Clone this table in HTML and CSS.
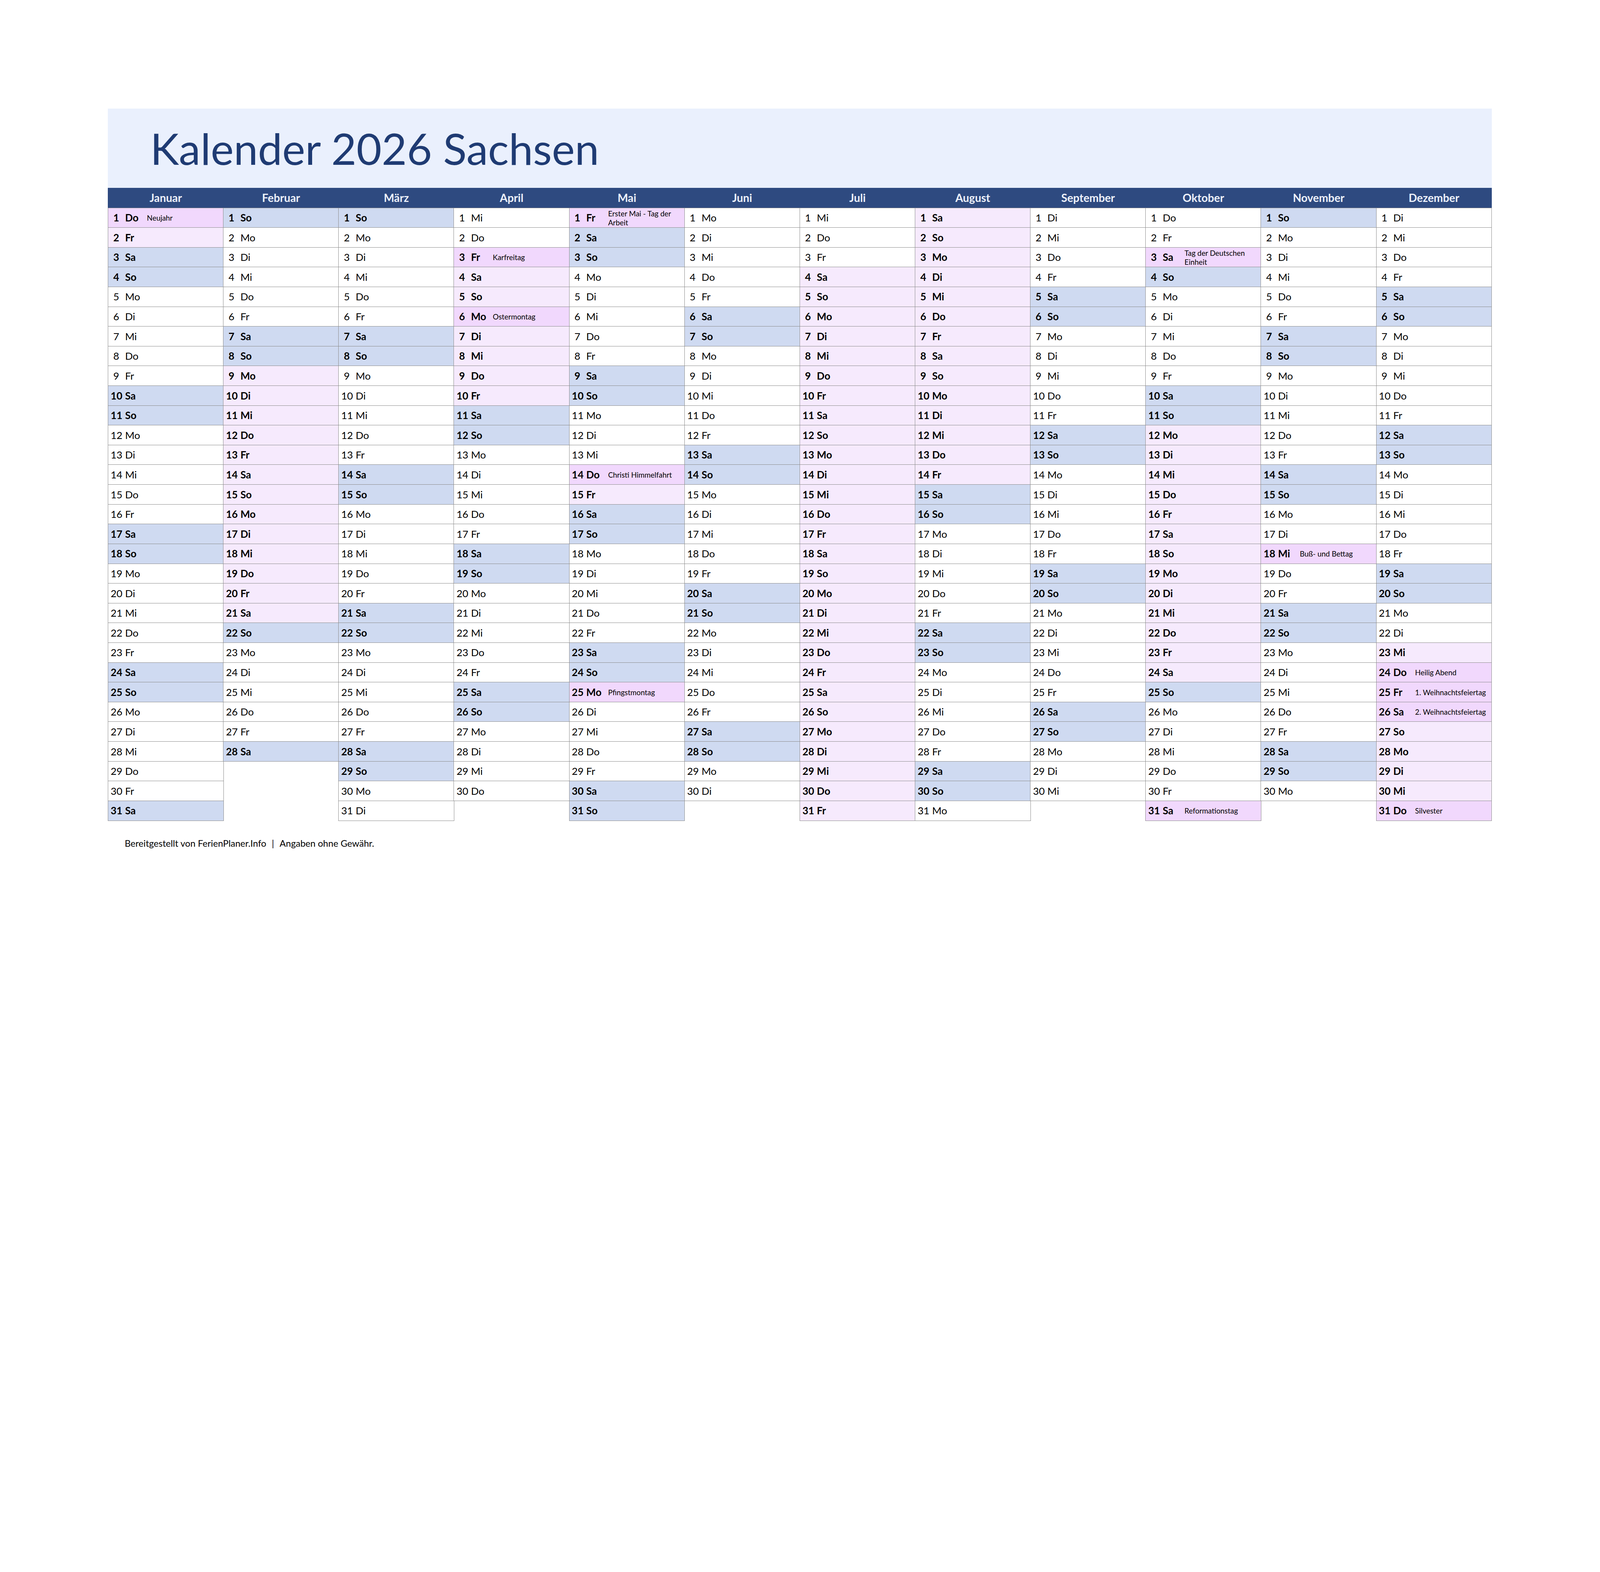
FILE: index.html
```html
<!DOCTYPE html>
<html lang="de">
<head>
<meta charset="utf-8">
<title>Kalender 2026 Sachsen</title>
<link rel="stylesheet" href="styles.css">
</head>
<body>
<div class="page">
  <header class="banner"><h1>Kalender 2026 Sachsen</h1></header>
  <div class="heads">
    <div>Januar</div><div>Februar</div><div>März</div><div>April</div><div>Mai</div><div>Juni</div>
    <div>Juli</div><div>August</div><div>September</div><div>Oktober</div><div>November</div><div>Dezember</div>
  </div>
  <div class="grid">
    <ol class="month">
      <li class="hol"><span class="n">1</span>Do<small>Neujahr</small></li>
      <li class="fer"><span class="n">2</span>Fr</li>
      <li class="we"><span class="n">3</span>Sa</li>
      <li class="we"><span class="n">4</span>So</li>
      <li><span class="n">5</span>Mo</li>
      <li><span class="n">6</span>Di</li>
      <li><span class="n">7</span>Mi</li>
      <li><span class="n">8</span>Do</li>
      <li><span class="n">9</span>Fr</li>
      <li class="we"><span class="n">10</span>Sa</li>
      <li class="we"><span class="n">11</span>So</li>
      <li><span class="n">12</span>Mo</li>
      <li><span class="n">13</span>Di</li>
      <li><span class="n">14</span>Mi</li>
      <li><span class="n">15</span>Do</li>
      <li><span class="n">16</span>Fr</li>
      <li class="we"><span class="n">17</span>Sa</li>
      <li class="we"><span class="n">18</span>So</li>
      <li><span class="n">19</span>Mo</li>
      <li><span class="n">20</span>Di</li>
      <li><span class="n">21</span>Mi</li>
      <li><span class="n">22</span>Do</li>
      <li><span class="n">23</span>Fr</li>
      <li class="we"><span class="n">24</span>Sa</li>
      <li class="we"><span class="n">25</span>So</li>
      <li><span class="n">26</span>Mo</li>
      <li><span class="n">27</span>Di</li>
      <li><span class="n">28</span>Mi</li>
      <li><span class="n">29</span>Do</li>
      <li><span class="n">30</span>Fr</li>
      <li class="we"><span class="n">31</span>Sa</li>
    </ol>
    <ol class="month">
      <li class="we"><span class="n">1</span>So</li>
      <li><span class="n">2</span>Mo</li>
      <li><span class="n">3</span>Di</li>
      <li><span class="n">4</span>Mi</li>
      <li><span class="n">5</span>Do</li>
      <li><span class="n">6</span>Fr</li>
      <li class="we"><span class="n">7</span>Sa</li>
      <li class="we"><span class="n">8</span>So</li>
      <li class="fer"><span class="n">9</span>Mo</li>
      <li class="fer"><span class="n">10</span>Di</li>
      <li class="fer"><span class="n">11</span>Mi</li>
      <li class="fer"><span class="n">12</span>Do</li>
      <li class="fer"><span class="n">13</span>Fr</li>
      <li class="fer"><span class="n">14</span>Sa</li>
      <li class="fer"><span class="n">15</span>So</li>
      <li class="fer"><span class="n">16</span>Mo</li>
      <li class="fer"><span class="n">17</span>Di</li>
      <li class="fer"><span class="n">18</span>Mi</li>
      <li class="fer"><span class="n">19</span>Do</li>
      <li class="fer"><span class="n">20</span>Fr</li>
      <li class="fer"><span class="n">21</span>Sa</li>
      <li class="we"><span class="n">22</span>So</li>
      <li><span class="n">23</span>Mo</li>
      <li><span class="n">24</span>Di</li>
      <li><span class="n">25</span>Mi</li>
      <li><span class="n">26</span>Do</li>
      <li><span class="n">27</span>Fr</li>
      <li class="we"><span class="n">28</span>Sa</li>
    </ol>
    <ol class="month">
      <li class="we"><span class="n">1</span>So</li>
      <li><span class="n">2</span>Mo</li>
      <li><span class="n">3</span>Di</li>
      <li><span class="n">4</span>Mi</li>
      <li><span class="n">5</span>Do</li>
      <li><span class="n">6</span>Fr</li>
      <li class="we"><span class="n">7</span>Sa</li>
      <li class="we"><span class="n">8</span>So</li>
      <li><span class="n">9</span>Mo</li>
      <li><span class="n">10</span>Di</li>
      <li><span class="n">11</span>Mi</li>
      <li><span class="n">12</span>Do</li>
      <li><span class="n">13</span>Fr</li>
      <li class="we"><span class="n">14</span>Sa</li>
      <li class="we"><span class="n">15</span>So</li>
      <li><span class="n">16</span>Mo</li>
      <li><span class="n">17</span>Di</li>
      <li><span class="n">18</span>Mi</li>
      <li><span class="n">19</span>Do</li>
      <li><span class="n">20</span>Fr</li>
      <li class="we"><span class="n">21</span>Sa</li>
      <li class="we"><span class="n">22</span>So</li>
      <li><span class="n">23</span>Mo</li>
      <li><span class="n">24</span>Di</li>
      <li><span class="n">25</span>Mi</li>
      <li><span class="n">26</span>Do</li>
      <li><span class="n">27</span>Fr</li>
      <li class="we"><span class="n">28</span>Sa</li>
      <li class="we"><span class="n">29</span>So</li>
      <li><span class="n">30</span>Mo</li>
      <li><span class="n">31</span>Di</li>
    </ol>
    <ol class="month">
      <li><span class="n">1</span>Mi</li>
      <li><span class="n">2</span>Do</li>
      <li class="hol"><span class="n">3</span>Fr<small>Karfreitag</small></li>
      <li class="fer"><span class="n">4</span>Sa</li>
      <li class="fer"><span class="n">5</span>So</li>
      <li class="hol"><span class="n">6</span>Mo<small>Ostermontag</small></li>
      <li class="fer"><span class="n">7</span>Di</li>
      <li class="fer"><span class="n">8</span>Mi</li>
      <li class="fer"><span class="n">9</span>Do</li>
      <li class="fer"><span class="n">10</span>Fr</li>
      <li class="we"><span class="n">11</span>Sa</li>
      <li class="we"><span class="n">12</span>So</li>
      <li><span class="n">13</span>Mo</li>
      <li><span class="n">14</span>Di</li>
      <li><span class="n">15</span>Mi</li>
      <li><span class="n">16</span>Do</li>
      <li><span class="n">17</span>Fr</li>
      <li class="we"><span class="n">18</span>Sa</li>
      <li class="we"><span class="n">19</span>So</li>
      <li><span class="n">20</span>Mo</li>
      <li><span class="n">21</span>Di</li>
      <li><span class="n">22</span>Mi</li>
      <li><span class="n">23</span>Do</li>
      <li><span class="n">24</span>Fr</li>
      <li class="we"><span class="n">25</span>Sa</li>
      <li class="we"><span class="n">26</span>So</li>
      <li><span class="n">27</span>Mo</li>
      <li><span class="n">28</span>Di</li>
      <li><span class="n">29</span>Mi</li>
      <li><span class="n">30</span>Do</li>
    </ol>
    <ol class="month">
      <li class="hol"><span class="n">1</span>Fr<small>Erster Mai - Tag der Arbeit</small></li>
      <li class="we"><span class="n">2</span>Sa</li>
      <li class="we"><span class="n">3</span>So</li>
      <li><span class="n">4</span>Mo</li>
      <li><span class="n">5</span>Di</li>
      <li><span class="n">6</span>Mi</li>
      <li><span class="n">7</span>Do</li>
      <li><span class="n">8</span>Fr</li>
      <li class="we"><span class="n">9</span>Sa</li>
      <li class="we"><span class="n">10</span>So</li>
      <li><span class="n">11</span>Mo</li>
      <li><span class="n">12</span>Di</li>
      <li><span class="n">13</span>Mi</li>
      <li class="hol"><span class="n">14</span>Do<small>Christi Himmelfahrt</small></li>
      <li class="fer"><span class="n">15</span>Fr</li>
      <li class="we"><span class="n">16</span>Sa</li>
      <li class="we"><span class="n">17</span>So</li>
      <li><span class="n">18</span>Mo</li>
      <li><span class="n">19</span>Di</li>
      <li><span class="n">20</span>Mi</li>
      <li><span class="n">21</span>Do</li>
      <li><span class="n">22</span>Fr</li>
      <li class="we"><span class="n">23</span>Sa</li>
      <li class="we"><span class="n">24</span>So</li>
      <li class="hol"><span class="n">25</span>Mo<small>Pfingstmontag</small></li>
      <li><span class="n">26</span>Di</li>
      <li><span class="n">27</span>Mi</li>
      <li><span class="n">28</span>Do</li>
      <li><span class="n">29</span>Fr</li>
      <li class="we"><span class="n">30</span>Sa</li>
      <li class="we"><span class="n">31</span>So</li>
    </ol>
    <ol class="month">
      <li><span class="n">1</span>Mo</li>
      <li><span class="n">2</span>Di</li>
      <li><span class="n">3</span>Mi</li>
      <li><span class="n">4</span>Do</li>
      <li><span class="n">5</span>Fr</li>
      <li class="we"><span class="n">6</span>Sa</li>
      <li class="we"><span class="n">7</span>So</li>
      <li><span class="n">8</span>Mo</li>
      <li><span class="n">9</span>Di</li>
      <li><span class="n">10</span>Mi</li>
      <li><span class="n">11</span>Do</li>
      <li><span class="n">12</span>Fr</li>
      <li class="we"><span class="n">13</span>Sa</li>
      <li class="we"><span class="n">14</span>So</li>
      <li><span class="n">15</span>Mo</li>
      <li><span class="n">16</span>Di</li>
      <li><span class="n">17</span>Mi</li>
      <li><span class="n">18</span>Do</li>
      <li><span class="n">19</span>Fr</li>
      <li class="we"><span class="n">20</span>Sa</li>
      <li class="we"><span class="n">21</span>So</li>
      <li><span class="n">22</span>Mo</li>
      <li><span class="n">23</span>Di</li>
      <li><span class="n">24</span>Mi</li>
      <li><span class="n">25</span>Do</li>
      <li><span class="n">26</span>Fr</li>
      <li class="we"><span class="n">27</span>Sa</li>
      <li class="we"><span class="n">28</span>So</li>
      <li><span class="n">29</span>Mo</li>
      <li><span class="n">30</span>Di</li>
    </ol>
    <ol class="month">
      <li><span class="n">1</span>Mi</li>
      <li><span class="n">2</span>Do</li>
      <li><span class="n">3</span>Fr</li>
      <li class="fer"><span class="n">4</span>Sa</li>
      <li class="fer"><span class="n">5</span>So</li>
      <li class="fer"><span class="n">6</span>Mo</li>
      <li class="fer"><span class="n">7</span>Di</li>
      <li class="fer"><span class="n">8</span>Mi</li>
      <li class="fer"><span class="n">9</span>Do</li>
      <li class="fer"><span class="n">10</span>Fr</li>
      <li class="fer"><span class="n">11</span>Sa</li>
      <li class="fer"><span class="n">12</span>So</li>
      <li class="fer"><span class="n">13</span>Mo</li>
      <li class="fer"><span class="n">14</span>Di</li>
      <li class="fer"><span class="n">15</span>Mi</li>
      <li class="fer"><span class="n">16</span>Do</li>
      <li class="fer"><span class="n">17</span>Fr</li>
      <li class="fer"><span class="n">18</span>Sa</li>
      <li class="fer"><span class="n">19</span>So</li>
      <li class="fer"><span class="n">20</span>Mo</li>
      <li class="fer"><span class="n">21</span>Di</li>
      <li class="fer"><span class="n">22</span>Mi</li>
      <li class="fer"><span class="n">23</span>Do</li>
      <li class="fer"><span class="n">24</span>Fr</li>
      <li class="fer"><span class="n">25</span>Sa</li>
      <li class="fer"><span class="n">26</span>So</li>
      <li class="fer"><span class="n">27</span>Mo</li>
      <li class="fer"><span class="n">28</span>Di</li>
      <li class="fer"><span class="n">29</span>Mi</li>
      <li class="fer"><span class="n">30</span>Do</li>
      <li class="fer"><span class="n">31</span>Fr</li>
    </ol>
    <ol class="month">
      <li class="fer"><span class="n">1</span>Sa</li>
      <li class="fer"><span class="n">2</span>So</li>
      <li class="fer"><span class="n">3</span>Mo</li>
      <li class="fer"><span class="n">4</span>Di</li>
      <li class="fer"><span class="n">5</span>Mi</li>
      <li class="fer"><span class="n">6</span>Do</li>
      <li class="fer"><span class="n">7</span>Fr</li>
      <li class="fer"><span class="n">8</span>Sa</li>
      <li class="fer"><span class="n">9</span>So</li>
      <li class="fer"><span class="n">10</span>Mo</li>
      <li class="fer"><span class="n">11</span>Di</li>
      <li class="fer"><span class="n">12</span>Mi</li>
      <li class="fer"><span class="n">13</span>Do</li>
      <li class="fer"><span class="n">14</span>Fr</li>
      <li class="we"><span class="n">15</span>Sa</li>
      <li class="we"><span class="n">16</span>So</li>
      <li><span class="n">17</span>Mo</li>
      <li><span class="n">18</span>Di</li>
      <li><span class="n">19</span>Mi</li>
      <li><span class="n">20</span>Do</li>
      <li><span class="n">21</span>Fr</li>
      <li class="we"><span class="n">22</span>Sa</li>
      <li class="we"><span class="n">23</span>So</li>
      <li><span class="n">24</span>Mo</li>
      <li><span class="n">25</span>Di</li>
      <li><span class="n">26</span>Mi</li>
      <li><span class="n">27</span>Do</li>
      <li><span class="n">28</span>Fr</li>
      <li class="we"><span class="n">29</span>Sa</li>
      <li class="we"><span class="n">30</span>So</li>
      <li><span class="n">31</span>Mo</li>
    </ol>
    <ol class="month">
      <li><span class="n">1</span>Di</li>
      <li><span class="n">2</span>Mi</li>
      <li><span class="n">3</span>Do</li>
      <li><span class="n">4</span>Fr</li>
      <li class="we"><span class="n">5</span>Sa</li>
      <li class="we"><span class="n">6</span>So</li>
      <li><span class="n">7</span>Mo</li>
      <li><span class="n">8</span>Di</li>
      <li><span class="n">9</span>Mi</li>
      <li><span class="n">10</span>Do</li>
      <li><span class="n">11</span>Fr</li>
      <li class="we"><span class="n">12</span>Sa</li>
      <li class="we"><span class="n">13</span>So</li>
      <li><span class="n">14</span>Mo</li>
      <li><span class="n">15</span>Di</li>
      <li><span class="n">16</span>Mi</li>
      <li><span class="n">17</span>Do</li>
      <li><span class="n">18</span>Fr</li>
      <li class="we"><span class="n">19</span>Sa</li>
      <li class="we"><span class="n">20</span>So</li>
      <li><span class="n">21</span>Mo</li>
      <li><span class="n">22</span>Di</li>
      <li><span class="n">23</span>Mi</li>
      <li><span class="n">24</span>Do</li>
      <li><span class="n">25</span>Fr</li>
      <li class="we"><span class="n">26</span>Sa</li>
      <li class="we"><span class="n">27</span>So</li>
      <li><span class="n">28</span>Mo</li>
      <li><span class="n">29</span>Di</li>
      <li><span class="n">30</span>Mi</li>
    </ol>
    <ol class="month">
      <li><span class="n">1</span>Do</li>
      <li><span class="n">2</span>Fr</li>
      <li class="hol"><span class="n">3</span>Sa<small>Tag der Deutschen Einheit</small></li>
      <li class="we"><span class="n">4</span>So</li>
      <li><span class="n">5</span>Mo</li>
      <li><span class="n">6</span>Di</li>
      <li><span class="n">7</span>Mi</li>
      <li><span class="n">8</span>Do</li>
      <li><span class="n">9</span>Fr</li>
      <li class="we"><span class="n">10</span>Sa</li>
      <li class="we"><span class="n">11</span>So</li>
      <li class="fer"><span class="n">12</span>Mo</li>
      <li class="fer"><span class="n">13</span>Di</li>
      <li class="fer"><span class="n">14</span>Mi</li>
      <li class="fer"><span class="n">15</span>Do</li>
      <li class="fer"><span class="n">16</span>Fr</li>
      <li class="fer"><span class="n">17</span>Sa</li>
      <li class="fer"><span class="n">18</span>So</li>
      <li class="fer"><span class="n">19</span>Mo</li>
      <li class="fer"><span class="n">20</span>Di</li>
      <li class="fer"><span class="n">21</span>Mi</li>
      <li class="fer"><span class="n">22</span>Do</li>
      <li class="fer"><span class="n">23</span>Fr</li>
      <li class="fer"><span class="n">24</span>Sa</li>
      <li class="we"><span class="n">25</span>So</li>
      <li><span class="n">26</span>Mo</li>
      <li><span class="n">27</span>Di</li>
      <li><span class="n">28</span>Mi</li>
      <li><span class="n">29</span>Do</li>
      <li><span class="n">30</span>Fr</li>
      <li class="hol"><span class="n">31</span>Sa<small>Reformationstag</small></li>
    </ol>
    <ol class="month">
      <li class="we"><span class="n">1</span>So</li>
      <li><span class="n">2</span>Mo</li>
      <li><span class="n">3</span>Di</li>
      <li><span class="n">4</span>Mi</li>
      <li><span class="n">5</span>Do</li>
      <li><span class="n">6</span>Fr</li>
      <li class="we"><span class="n">7</span>Sa</li>
      <li class="we"><span class="n">8</span>So</li>
      <li><span class="n">9</span>Mo</li>
      <li><span class="n">10</span>Di</li>
      <li><span class="n">11</span>Mi</li>
      <li><span class="n">12</span>Do</li>
      <li><span class="n">13</span>Fr</li>
      <li class="we"><span class="n">14</span>Sa</li>
      <li class="we"><span class="n">15</span>So</li>
      <li><span class="n">16</span>Mo</li>
      <li><span class="n">17</span>Di</li>
      <li class="hol"><span class="n">18</span>Mi<small>Buß- und Bettag</small></li>
      <li><span class="n">19</span>Do</li>
      <li><span class="n">20</span>Fr</li>
      <li class="we"><span class="n">21</span>Sa</li>
      <li class="we"><span class="n">22</span>So</li>
      <li><span class="n">23</span>Mo</li>
      <li><span class="n">24</span>Di</li>
      <li><span class="n">25</span>Mi</li>
      <li><span class="n">26</span>Do</li>
      <li><span class="n">27</span>Fr</li>
      <li class="we"><span class="n">28</span>Sa</li>
      <li class="we"><span class="n">29</span>So</li>
      <li><span class="n">30</span>Mo</li>
    </ol>
    <ol class="month">
      <li><span class="n">1</span>Di</li>
      <li><span class="n">2</span>Mi</li>
      <li><span class="n">3</span>Do</li>
      <li><span class="n">4</span>Fr</li>
      <li class="we"><span class="n">5</span>Sa</li>
      <li class="we"><span class="n">6</span>So</li>
      <li><span class="n">7</span>Mo</li>
      <li><span class="n">8</span>Di</li>
      <li><span class="n">9</span>Mi</li>
      <li><span class="n">10</span>Do</li>
      <li><span class="n">11</span>Fr</li>
      <li class="we"><span class="n">12</span>Sa</li>
      <li class="we"><span class="n">13</span>So</li>
      <li><span class="n">14</span>Mo</li>
      <li><span class="n">15</span>Di</li>
      <li><span class="n">16</span>Mi</li>
      <li><span class="n">17</span>Do</li>
      <li><span class="n">18</span>Fr</li>
      <li class="we"><span class="n">19</span>Sa</li>
      <li class="we"><span class="n">20</span>So</li>
      <li><span class="n">21</span>Mo</li>
      <li><span class="n">22</span>Di</li>
      <li class="fer"><span class="n">23</span>Mi</li>
      <li class="hol"><span class="n">24</span>Do<small>Heilig Abend</small></li>
      <li class="hol"><span class="n">25</span>Fr<small>1. Weihnachtsfeiertag</small></li>
      <li class="hol"><span class="n">26</span>Sa<small>2. Weihnachtsfeiertag</small></li>
      <li class="fer"><span class="n">27</span>So</li>
      <li class="fer"><span class="n">28</span>Mo</li>
      <li class="fer"><span class="n">29</span>Di</li>
      <li class="fer"><span class="n">30</span>Mi</li>
      <li class="hol"><span class="n">31</span>Do<small>Silvester</small></li>
    </ol>
  </div>
  <p class="foot">Bereitgestellt von FerienPlaner.Info<span class="sep">|</span>Angaben ohne Gewähr.</p>
</div>
</body>
</html>
```

FILE: styles.css
```css
/* one design unit = one pixel of the 5209px wide sheet */
:root {
  --u: calc(100vw / 5209);
}

* {
  box-sizing: border-box;
}

html,
body {
  margin: 0;
  background: #ffffff;
}

body {
  font-family: Lato, "Open Sans", "Liberation Sans", sans-serif;
  color: #000000;
}

.page {
  width: calc(4857 * var(--u));
  padding: calc(354 * var(--u)) 0 0 calc(351 * var(--u));
}

.banner {
  height: calc(258 * var(--u));
  background: #eaf0fd;
  display: flex;
  align-items: center;
  padding-left: calc(138 * var(--u));
}

.banner h1 {
  margin: 0;
  font-size: calc(141.5 * var(--u));
  font-weight: 400;
  line-height: 1;
  color: #1f3b73;
}

.heads {
  display: flex;
  height: calc(64 * var(--u));
  background: #2e4a80;
}

.heads div {
  flex: 1 1 0;
  min-width: 0;
  margin-right: calc(-2 * var(--u));
  display: flex;
  align-items: center;
  justify-content: center;
  color: #eef2fb;
  font-size: calc(36 * var(--u));
  font-weight: 700;
}

.heads div:last-child {
  margin-right: 0;
}

.grid {
  display: flex;
  align-items: flex-start;
}

.month {
  flex: 1 1 0;
  min-width: 0;
  list-style: none;
  margin: 0 calc(-2 * var(--u)) 0 0;
  padding: 0;
}

.month:last-child {
  margin-right: 0;
}

.month li {
  height: calc(66.35 * var(--u));
  margin-top: calc(-2 * var(--u));
  border: calc(2 * var(--u)) solid #8c8c8c;
  background: #ffffff;
  display: grid;
  grid-template-columns: calc(47 * var(--u)) calc(71 * var(--u)) 1fr;
  align-items: center;
  padding-left: calc(8 * var(--u));
  font-size: calc(33 * var(--u));
  line-height: 1.2;
  white-space: nowrap;
}

.month li:first-child {
  margin-top: 0;
}

.month .n {
  text-align: center;
  padding-right: calc(11 * var(--u));
}

.month small {
  font-size: calc(24 * var(--u));
  font-weight: 400;
  line-height: 1.22;
  white-space: normal;
  padding-right: calc(4 * var(--u));
}

.month .we {
  background: #cfdaf1;
  font-weight: 700;
}

.month .hol {
  background: #f1d8fd;
  font-weight: 700;
}

.month .fer {
  background: #f6eafd;
  font-weight: 700;
}

.foot {
  margin: calc(55 * var(--u)) 0 0;
  padding-left: calc(55 * var(--u));
  font-size: calc(30 * var(--u));
  line-height: 1.2;
}

.foot .sep {
  margin: 0 calc(18 * var(--u));
}
```
